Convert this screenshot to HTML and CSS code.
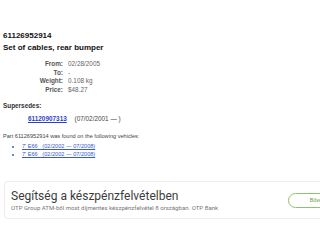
FILE: index.html
```html
<!DOCTYPE html>
<html lang="en">
<head>
    <meta charset="UTF-8">
    <meta name="viewport" content="width=device-width, initial-scale=1.0">
    <title>61126952914 - Set of cables, rear bumper</title>
    <link rel="stylesheet" href="styles.css">
</head>
<body>

    <!-- PART -->
    <div class="part">
        <h1>61126952914</h1>
        <h2>Set of cables, rear bumper</h2>

        <div class="details">
            <span class="label">From:</span><span class="value">02/28/2005</span>
            <span class="label">To:</span><span class="value">-</span>
            <span class="label">Weight:</span><span class="value">0.108 kg</span>
            <span class="label">Price:</span><span class="value">$48.27</span>
        </div>

        <h3>Supersedes:</h3>
        <div class="supersedes">
            <a href="#" class="part-link">61120907313</a>
            <span class="range">(07/02/2001 &mdash; )</span>
        </div>

        <p class="found">Part 61126952914 was found on the following vehicles:</p>
        <ul class="vehicles">
            <li><a href="#">7' E66 &nbsp;&nbsp;(02/2002 &mdash; 07/2008)</a></li>
            <li><a href="#">7' E66 &nbsp;&nbsp;(02/2002 &mdash; 07/2008)</a></li>
        </ul>
    </div>

    <!-- AD -->
    <div class="ad">
        <div class="ad-text">
            <div class="ad-title">Segítség a készpénzfelvételben</div>
            <div class="ad-desc">OTP Group ATM-ből most díjmentes készpénzfelvétel 8 országban. OTP Bank</div>
        </div>
        <a href="#" class="ad-btn">Bővebben</a>
    </div>

</body>
</html>
```

FILE: styles.css
```css
* { margin: 0; padding: 0; box-sizing: border-box; }
body {
    background: #fff; font-family: "Liberation Sans", Arial, sans-serif;
    color: #222; overflow: hidden; padding: 31px 3px 0;
}

/* PART */
h1 { font-size: 8px; font-weight: bold; line-height: 10px; color: #111; }
h2 { font-size: 8px; font-weight: bold; line-height: 10px; color: #111; margin-top: 2px; }

.details {
    display: grid; grid-template-columns: 60px auto; column-gap: 5px;
    font-size: 6.4px; line-height: 8.6px; margin-top: 7px;
}

.label { text-align: right; font-weight: bold; color: #555; }
.value { color: #666; }

h3 { font-size: 6.4px; font-weight: bold; color: #333; margin-top: 7px; line-height: 9px; }

.supersedes { font-size: 6.4px; margin: 4px 0 0 25px; line-height: 9px; }
.part-link { color: #2a3fc8; font-weight: bold; }
.range { color: #444; margin-left: 6px; }

.found { font-size: 5.6px; color: #444; margin-top: 9px; line-height: 8px; }

.vehicles { list-style: disc; padding-left: 19px; margin-top: 2px; font-size: 5.6px; line-height: 8px; color: #3a5ad0; }
.vehicles a { color: #3a5ad0; }

/* AD */
.ad {
    width: 360px; margin: 23px 0 0 1px; padding: 7px 6px 6px;
    border: 1px solid #ececec; border-radius: 4px;
    display: flex; align-items: center;
    font-family: Roboto, "Liberation Sans", sans-serif;
}

.ad-text { flex: none; width: 277px; }
.ad-title { font-size: 12px; color: #3c3c3c; line-height: 14px; }
.ad-desc { font-size: 6.05px; color: #777; line-height: 8px; margin-top: 1px; }

.ad-btn {
    display: inline-block; flex: none; width: 68px; height: 15px;
    border: 1px solid #8cc46c; border-radius: 8px;
    color: #5aa33a; font-size: 5.6px; line-height: 13px;
    text-align: center; text-decoration: none;
}
```
